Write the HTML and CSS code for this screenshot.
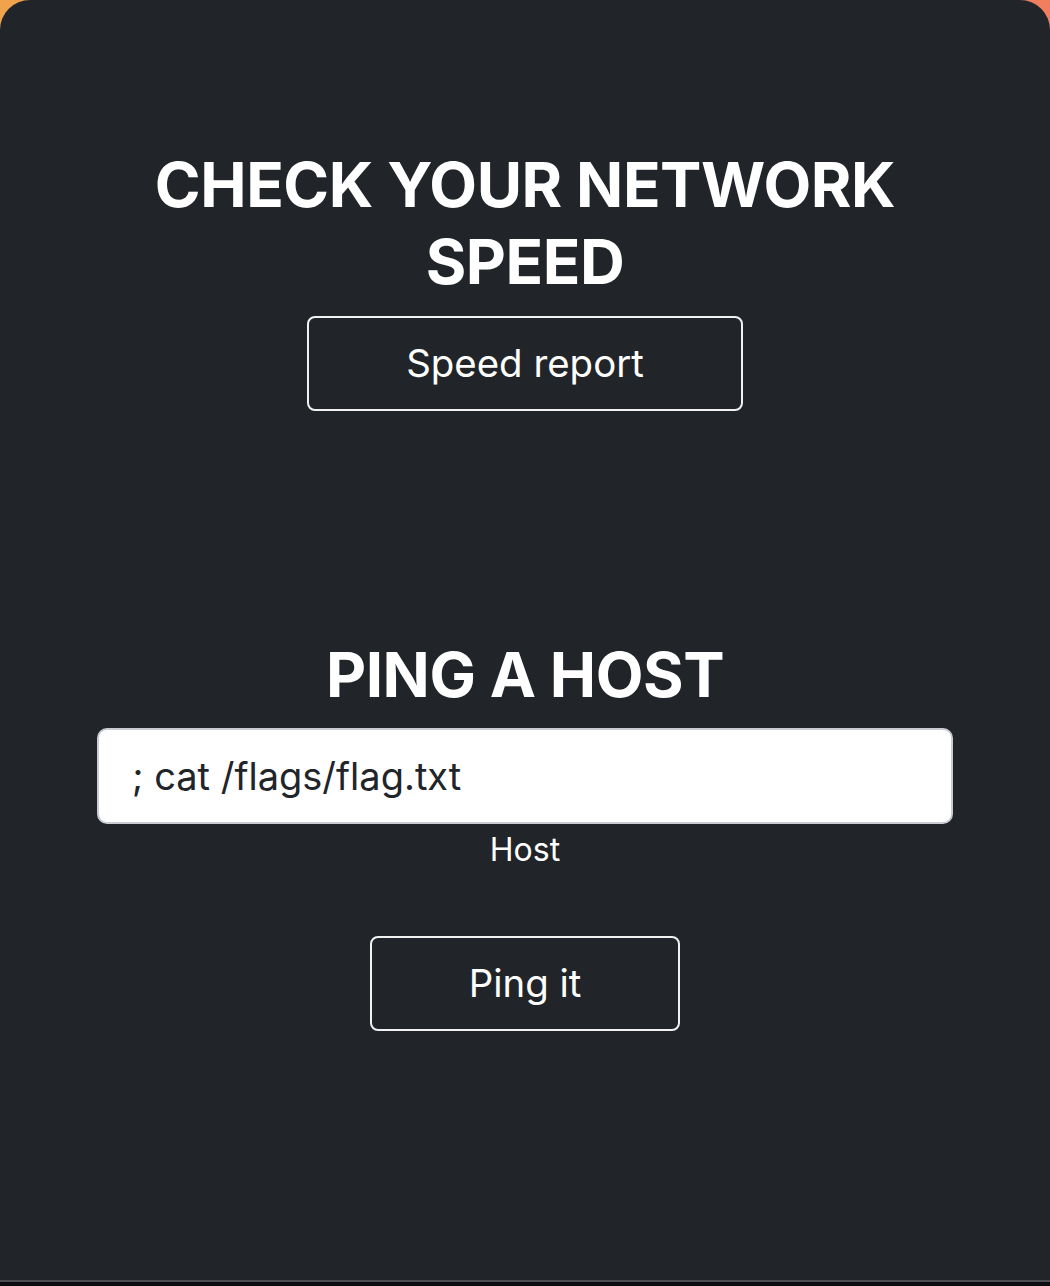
FILE: index.html
```html
<!DOCTYPE html>
<html lang="en">
<head>
<meta charset="utf-8">
<title>Network tools</title>
<link rel="stylesheet" href="styles.css">
</head>
<body>
<div class="card">
  <section class="block speed">
    <h1 class="title">CHECK YOUR NETWORK SPEED</h1>
    <button class="btn btn-speed" type="button">Speed report</button>
  </section>
  <section class="block ping">
    <h1 class="title">PING A HOST</h1>
    <div class="field">
      <input class="host-input" type="text" value="; cat /flags/flag.txt">
      <label class="host-label">Host</label>
    </div>
    <button class="btn btn-ping" type="button">Ping it</button>
  </section>
</div>
<div class="footer-strip"></div>
</body>
</html>
```

FILE: styles.css
```css
html, body {
  margin: 0;
  padding: 0;
}
body {
  width: 1050px;
  height: 1286px;
  background: linear-gradient(to right, #f0a24c, #f07e5f);
  font-family: Inter, "Noto Sans", sans-serif;
  overflow: hidden;
}
.card {
  box-sizing: border-box;
  height: 1282px;
  background: #212529;
  border-radius: 30px 30px 0 0;
  border-bottom: 2px solid #4b4f53;
  display: flex;
  flex-direction: column;
  align-items: center;
  padding-top: 146px;
  color: #fff;
}
.footer-strip {
  height: 4px;
  background: #0b0c0d;
}
.block {
  display: flex;
  flex-direction: column;
  align-items: center;
}
.title {
  margin: 0;
  width: 760px;
  text-align: center;
  font-size: 62px;
  line-height: 77px;
  font-weight: 700;
  letter-spacing: -0.45px;
}
.btn {
  font-family: Inter, "Noto Sans", sans-serif;
  background: transparent;
  color: #fff;
  border: 2px solid #f1f1f1;
  border-radius: 8px;
  font-size: 38.4px;
  line-height: 55px;
  padding: 18px 97px;
  cursor: pointer;
}
.btn-speed {
  margin-top: 16px;
}
.ping {
  margin-top: 225px;
}
.field {
  margin-top: 15px;
  display: flex;
  flex-direction: column;
  align-items: center;
}
.host-input {
  box-sizing: border-box;
  width: 856px;
  height: 96px;
  padding: 0 33px;
  font-family: Inter, "Noto Sans", sans-serif;
  font-size: 38px;
  color: #212529;
  background: #fff;
  border: 2px solid #c9cdd2;
  border-radius: 10px;
  outline: none;
}
.host-label {
  margin-top: 4px;
  font-size: 32px;
  line-height: 44px;
  color: #fff;
}
.btn-ping {
  margin-top: 64px;
}
```
